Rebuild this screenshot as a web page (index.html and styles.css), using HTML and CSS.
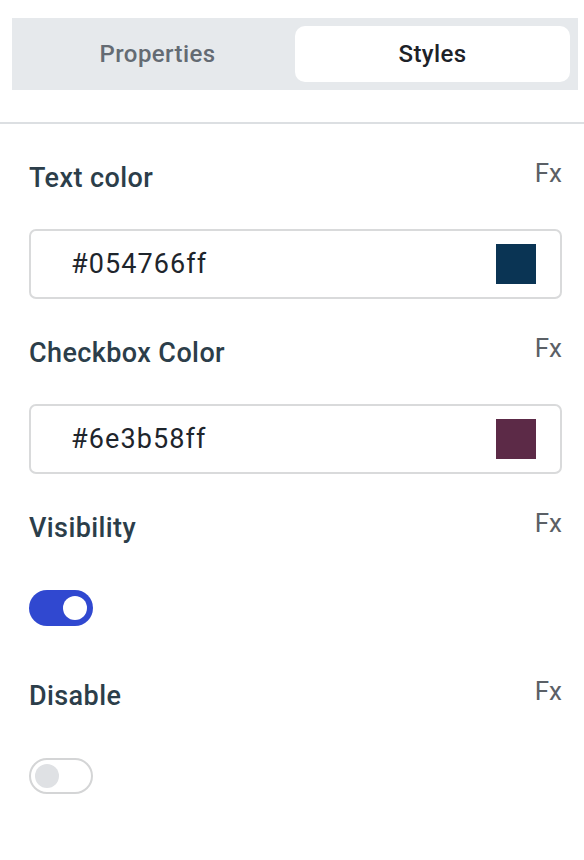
FILE: index.html
```html
<!DOCTYPE html>
<html>
<head>
<meta charset="utf-8">
<link rel="stylesheet" href="styles.css">
</head>
<body>
<div class="panel">
  <div class="tabs-wrap">
    <div class="tabs">
      <div class="tab">Properties</div>
      <div class="tab active">Styles</div>
    </div>
  </div>
  <div class="divider"></div>
  <div class="section">
    <div class="row"><span class="label">Text color</span><span class="fx">Fx</span></div>
    <div class="input"><span class="value">#054766ff</span><span class="swatch swatch-a"></span></div>
  </div>
  <div class="section">
    <div class="row"><span class="label">Checkbox Color</span><span class="fx">Fx</span></div>
    <div class="input"><span class="value">#6e3b58ff</span><span class="swatch swatch-b"></span></div>
  </div>
  <div class="section">
    <div class="row"><span class="label">Visibility</span><span class="fx">Fx</span></div>
    <div class="toggle on"><span class="knob"></span></div>
  </div>
  <div class="section">
    <div class="row"><span class="label">Disable</span><span class="fx">Fx</span></div>
    <div class="toggle off"><span class="knob"></span></div>
  </div>
</div>
</body>
</html>
```
FILE: styles.css
```css
* { box-sizing: border-box; }
html, body { margin: 0; padding: 0; background: #fff; }
body { font-family: Roboto, "Liberation Sans", sans-serif; width: 584px; height: 860px; overflow: hidden; }
.panel { display: flex; flex-direction: column; }
.tabs-wrap { padding: 18px 6px 0 12px; }
.tabs { display: flex; background: #e6e9ec; height: 72px; padding: 8px 8px 8px 8px; }
.tab { flex: 1; display: flex; align-items: center; justify-content: center; font-size: 24px; letter-spacing: 0.4px; font-weight: 500; color: #646b73; border-radius: 10px; }
.tab.active { background: #fff; color: #1d2228; }
.divider { height: 2px; background: #dcdfe2; margin-top: 32px; }
.section { padding: 0 22px 0 29px; }
.row { display: flex; justify-content: space-between; align-items: flex-start; height: 106px; padding-top: 34px; }
.label { font-size: 27px; font-weight: 500; color: #2c3e4a; line-height: 40px; letter-spacing: 0.4px; }
.fx { font-size: 26px; color: #5b6066; line-height: 30px; margin-top: 0; }
.input { height: 70px; border: 2px solid #d9dadb; border-radius: 7px; display: flex; align-items: center; justify-content: space-between; padding: 0 24px 0 40px; margin-top: -1px; }
.value { font-size: 27px; letter-spacing: 1.1px; color: #1e252c; }
.swatch { width: 40px; height: 40px; }
.swatch-a { background: #0a3454; }
.swatch-b { background: #5c2a47; }
.toggle { width: 64px; height: 36px; border-radius: 18px; position: relative; margin-top: 10px; margin-bottom: 16px; }
.toggle.on { background: #3048d0; }
.toggle.off { border: 2px solid #d4d5d6; background: #fff; }
.knob { position: absolute; width: 24px; height: 24px; border-radius: 50%; top: 6px; }
.on .knob { background: #fff; right: 6px; }
.off .knob { background: #dfe1e4; left: 4px; top: 4px; }
```
